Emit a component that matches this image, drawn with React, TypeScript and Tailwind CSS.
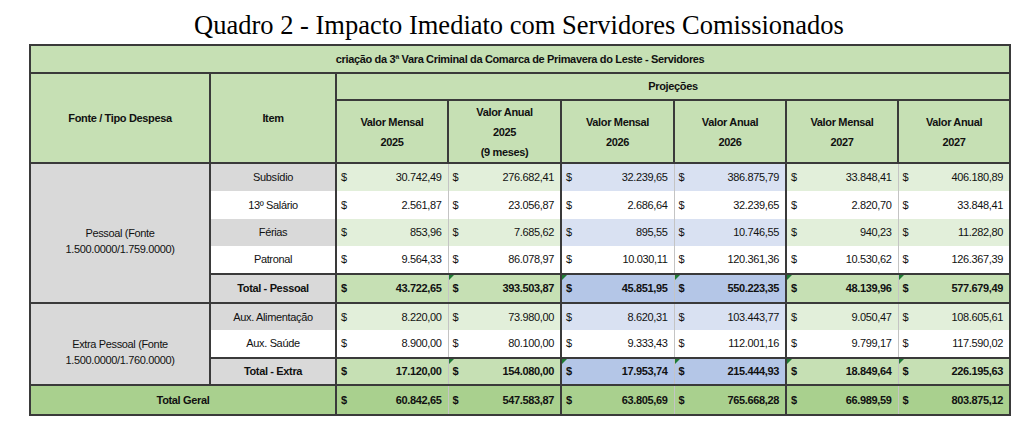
import React from 'react';

type Row = {
    item: string;
    values: string[];
    kind: 'shade' | 'plain' | 'total';
    h: string;
};

const pessoal: Row[] = [
    { item: 'Subsídio', values: ['30.742,49', '276.682,41', '32.239,65', '386.875,79', '33.848,41', '406.180,89'], kind: 'shade', h: 'h-[28px]' },
    { item: '13º Salário', values: ['2.561,87', '23.056,87', '2.686,64', '32.239,65', '2.820,70', '33.848,41'], kind: 'plain', h: 'h-[28px]' },
    { item: 'Férias', values: ['853,96', '7.685,62', '895,55', '10.746,55', '940,23', '11.282,80'], kind: 'shade', h: 'h-[27px]' },
    { item: 'Patronal', values: ['9.564,33', '86.078,97', '10.030,11', '120.361,36', '10.530,62', '126.367,39'], kind: 'plain', h: 'h-[28px]' },
    { item: 'Total - Pessoal', values: ['43.722,65', '393.503,87', '45.851,95', '550.223,35', '48.139,96', '577.679,49'], kind: 'total', h: 'h-[29px]' },
];

const extra: Row[] = [
    { item: 'Aux. Alimentação', values: ['8.220,00', '73.980,00', '8.620,31', '103.443,77', '9.050,47', '108.605,61'], kind: 'shade', h: 'h-[27px]' },
    { item: 'Aux. Saúde', values: ['8.900,00', '80.100,00', '9.333,43', '112.001,16', '9.799,17', '117.590,02'], kind: 'plain', h: 'h-[28px]' },
    { item: 'Total - Extra', values: ['17.120,00', '154.080,00', '17.953,74', '215.444,93', '18.849,64', '226.195,63'], kind: 'total', h: 'h-[27px]' },
];

const geral = ['60.842,65', '547.583,87', '63.805,69', '765.668,28', '66.989,59', '803.875,12'];

// fundo por coluna (0,1 = 2025 / 2,3 = 2026 / 4,5 = 2027)
const cellBg = (kind: Row['kind'] | 'geral', col: number) => {
    const blue = col === 2 || col === 3;
    if (kind === 'geral') return 'bg-[#a9d08e] font-bold';
    if (kind === 'total') return blue ? 'bg-[#b4c6e7] font-bold' : 'bg-[#c6e0b4] font-bold';
    if (kind === 'shade') return blue ? 'bg-[#d9e1f2]' : 'bg-[#e2efda]';
    return 'bg-white';
};

const Money: React.FC<{ value: string; col: number; kind: Row['kind'] | 'geral' }> = ({ value, col, kind }) => {
    const left = col % 2 === 0 ? 'border-l-2 border-l-[#3a3a3a]' : 'border-l border-l-[#c4c4c4]';
    const right = col === 5 ? 'border-r-2 border-r-[#3a3a3a]' : '';
    const yb = kind === 'plain' || kind === 'shade' ? 'border-y-0' : 'border-y-2 border-y-[#3a3a3a]';
    const flag = kind === 'total' && col > 0;
    return (
        <td className={`relative px-0 ${left} ${right} ${yb} ${cellBg(kind, col)}`}>
            {flag && (
                <span className="absolute left-0 top-0 w-0 h-0 border-t-[5px] border-r-[5px] border-t-[#1f7a35] border-r-transparent" />
            )}
            <div className="flex justify-between pl-[4px] pr-[6px]">
                <span>$</span>
                <span>{value}</span>
            </div>
        </td>
    );
};

const Group: React.FC<{ label: string[]; rows: Row[] }> = ({ label, rows }) => (
    <>
        {rows.map((r, i) => (
            <tr key={r.item} className={r.h}>
                {i === 0 && (
                    <td rowSpan={rows.length} className="border-2 border-[#3a3a3a] bg-[#d9d9d9] text-center align-middle pt-[16px] leading-[16px]">
                        {label[0]}
                        <br />
                        {label[1]}
                    </td>
                )}
                <td
                    className={`text-center border-x-2 border-x-[#3a3a3a] ${
                        r.kind === 'total' ? 'border-y-2 border-y-[#3a3a3a] font-bold' : 'border-y-0'
                    } ${r.kind === 'plain' ? 'bg-white' : 'bg-[#d9d9d9]'}`}
                >
                    {r.item}
                </td>
                {r.values.map((v, c) => (
                    <Money key={c} value={v} col={c} kind={r.kind} />
                ))}
            </tr>
        ))}
    </>
);

const headers = [
    ['Valor Mensal', '2025'],
    ['Valor Anual', '2025', '(9 meses)'],
    ['Valor Mensal', '2026'],
    ['Valor Anual', '2026'],
    ['Valor Mensal', '2027'],
    ['Valor Anual', '2027'],
];

const App: React.FC = () => {
    return (
        <div className="w-[1024px] h-[435px] bg-white pl-[29px] text-[#111111]">
            <div className="w-[980px] h-[44px] pt-[10px] text-center text-[26.5px] leading-[30px] text-black font-['Liberation_Serif',serif]">
                Quadro 2 - Impacto Imediato com Servidores Comissionados
            </div>

            <table className="w-[980px] table-fixed border-collapse text-[11px] tracking-[-0.35px] font-['Liberation_Sans',Arial,sans-serif]">
                <colgroup>
                    <col className="w-[180px]" />
                    <col className="w-[126px]" />
                    <col className="w-[112px]" />
                    <col className="w-[113px]" />
                    <col className="w-[113px]" />
                    <col className="w-[112px]" />
                    <col className="w-[112px]" />
                    <col className="w-[112px]" />
                </colgroup>
                <thead>
                    <tr className="h-[28px]">
                        <th colSpan={8} className="border-2 border-[#3a3a3a] bg-[#c6e0b4] font-bold">
                            criação da 3ª Vara Criminal da Comarca de Primavera do Leste - Servidores
                        </th>
                    </tr>
                    <tr className="h-[27px]">
                        <th rowSpan={2} className="border-2 border-[#3a3a3a] bg-[#c6e0b4] font-bold">
                            Fonte / Tipo Despesa
                        </th>
                        <th rowSpan={2} className="border-2 border-[#3a3a3a] bg-[#c6e0b4] font-bold">
                            Item
                        </th>
                        <th colSpan={6} className="border-2 border-[#3a3a3a] bg-[#c6e0b4] font-bold">
                            Projeções
                        </th>
                    </tr>
                    <tr className="h-[63px]">
                        {headers.map((h, i) => (
                            <th key={i} className="border-2 border-[#3a3a3a] bg-[#c6e0b4] font-bold leading-[20px]">
                                {h.map((l, j) => (
                                    <div key={j}>{l}</div>
                                ))}
                            </th>
                        ))}
                    </tr>
                </thead>
                <tbody>
                    <Group label={['Pessoal (Fonte', '1.500.0000/1.759.0000)']} rows={pessoal} />
                    <Group label={['Extra Pessoal (Fonte', '1.500.0000/1.760.0000)']} rows={extra} />
                    <tr className="h-[30px]">
                        <td colSpan={2} className="border-2 border-[#3a3a3a] bg-[#a9d08e] text-center font-bold">
                            Total Geral
                        </td>
                        {geral.map((v, c) => (
                            <Money key={c} value={v} col={c} kind="geral" />
                        ))}
                    </tr>
                </tbody>
            </table>
        </div>
    );
};

export default App;
